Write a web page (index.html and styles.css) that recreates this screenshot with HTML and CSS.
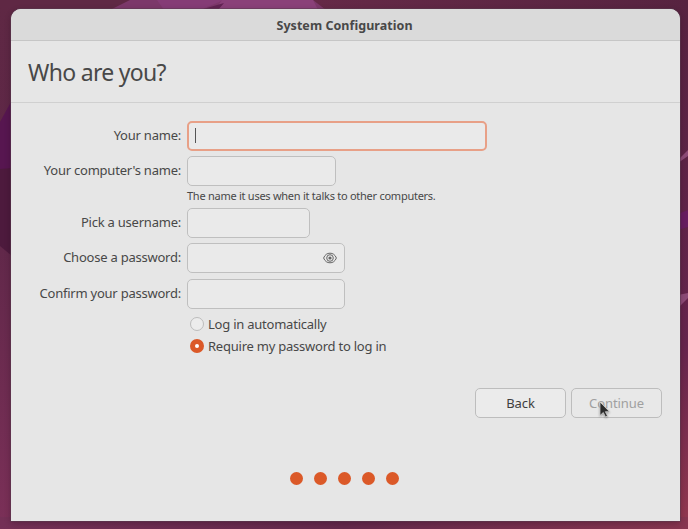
FILE: index.html
```html
<!DOCTYPE html>
<html lang="en">
<head>
<meta charset="utf-8">
<title>System Configuration</title>
<link rel="stylesheet" href="styles.css">
</head>
<body>
<svg class="wallpaper" viewBox="0 0 688 529" preserveAspectRatio="none" aria-hidden="true">
  <defs>
    <linearGradient id="left" x1="0" y1="0" x2="0" y2="1"><stop offset="0" stop-color="#5f2844"/><stop offset=".4" stop-color="#5e2748"/><stop offset="1" stop-color="#7b3058"/></linearGradient>
    <linearGradient id="right" x1="0" y1="0" x2="0" y2="1"><stop offset="0" stop-color="#572340"/><stop offset=".65" stop-color="#66254d"/><stop offset="1" stop-color="#93384f"/></linearGradient>
    <linearGradient id="top" x1="0" y1="0" x2="1" y2="0"><stop offset="0" stop-color="#652947"/><stop offset="1" stop-color="#572340"/></linearGradient>
    <linearGradient id="base" x1="0" y1="0" x2="1" y2="0"><stop offset="0" stop-color="#743056"/><stop offset=".5" stop-color="#64294c"/><stop offset="1" stop-color="#873650"/></linearGradient>
  </defs>
  <rect width="344" height="529" fill="url(#left)"/>
  <rect x="344" width="344" height="529" fill="url(#right)"/>
  <rect x="313" width="375" height="10" fill="url(#top)"/>
  <rect y="517" width="688" height="12" fill="url(#base)"/>
  <path d="M110 10 130 0H313L326 10Z" fill="#7c386a"/>
  <path d="M157 0H224L200 10H164Z" fill="#853c76"/>
  <path d="M222 0H313L318 10H215Z" fill="#8a4079"/>
  <path d="M224 3 200 10H218Z" fill="#622353"/>
  <path d="M0 122 12 100V170H0Z" fill="#571650"/>
  <path d="M0 169 12 168V256L0 246Z" fill="#4d1a3d"/>
  <path d="M678 160 688 150V156L678 163Z" fill="#8d4b77"/>
  <path d="M678 214 688 210V227L678 230Z" fill="#681d60"/>
  <path d="M678 295 688 293V298L678 308Z" fill="#8d4b77"/>
</svg>

<main class="window">
  <header class="titlebar">System Configuration</header>
  <div class="heading"><h1>Who are you?</h1></div>

  <form class="form">
    <label for="name">Your name:</label>
    <div class="field field-name focused" id="name"><span class="caret"></span></div>
    <label for="host">Your computer's name:</label>
    <div class="field field-host" id="host"></div>
    <p class="hint">The name it uses when it talks to other computers.</p>
    <label for="user">Pick a username:</label>
    <div class="field field-user" id="user"></div>
    <label for="pass">Choose a password:</label>
    <div class="field field-pass" id="pass">
      <svg class="eye" viewBox="0 0 14 12" aria-hidden="true"><path d="M.6 6C2 2.500 4.300 1.200 7 1.200S12 2.500 13.400 6C12 9.500 9.700 10.800 7 10.800S2 9.500.6 6Z"/><circle cx="7" cy="6" r="3.300"/><circle class="pupil" cx="7" cy="6" r="1.600"/></svg>
    </div>
    <label for="confirm">Confirm your password:</label>
    <div class="field field-pass" id="confirm"></div>
    <div class="radios">
      <div class="option"><i class="radio"></i><span>Log in automatically</span></div>
      <div class="option"><i class="radio checked"></i><span>Require my password to log in</span></div>
    </div>
  </form>

  <div class="actions">
    <button type="button">Back</button>
    <button type="button" disabled>Continue</button>
  </div>

  <footer class="steps"><i></i><i></i><i></i><i></i><i></i></footer>
</main>

<svg class="cursor" viewBox="0 0 12 18" aria-hidden="true"><path d="M1 1V14.500L4.300 11.500 6.500 16 8.500 15 6.400 10.700H10.500Z"/></svg>
</body>
</html>
```

FILE: styles.css
```css
* { box-sizing: border-box; }
body {
  margin: 0;
  width: 688px;
  height: 529px;
  overflow: hidden;
  padding: 9px 8px 8px 11px;
  background: #64294c;
  color: #484848;
  font: 13px/18px "Noto Sans", sans-serif;
  letter-spacing: -.23px;
}
.wallpaper { position: absolute; inset: 0; width: 688px; height: 529px; z-index: -1; }
.window {
  width: 669px;
  height: 512px;
  background: #e6e6e6;
  border-radius: 10px 10px 0 0;
  box-shadow: 0 0 0 1px rgba(90, 60, 80, .5), 0 2px 6px rgba(25, 5, 20, .3);
  overflow: hidden;
}
.titlebar {
  height: 32px;
  padding-right: 2px;
  border-bottom: 1px solid #c6c6c6;
  background: #dadada;
  line-height: 33px;
  text-align: center;
  font-size: 12.5px;
  font-weight: 700;
  letter-spacing: .05px;
}
.heading { height: 62px; padding: 14px 17px; border-bottom: 1px solid #d0d0d0; }
h1 { margin: 0; font-size: 23px; line-height: 34px; font-weight: 400; letter-spacing: -.7px; }
.form {
  display: grid;
  grid-template-columns: 170px 1fr;
  grid-template-rows: 35px 31px 21px 35px 36px 34px 44px;
  column-gap: 6px;
  padding-top: 18px;
  height: 286px;
}
.form label { text-align: right; line-height: 29px; white-space: nowrap; }
.field {
  height: 30px;
  border: 1px solid #bfbfbf;
  border-radius: 5px;
  background: #eaeaea;
}
.field-name { width: 300px; }
.field-host { width: 149px; }
.field-user { width: 123px; }
.field-pass { width: 158px; display: flex; align-items: center; justify-content: flex-end; padding-right: 7px; }
.focused { border: 2px solid #e8a087; padding: 5px 6px; }
.caret { display: block; width: 1px; height: 15px; background: #555; }
.eye { width: 14px; height: 12px; fill: none; stroke: #666; stroke-width: 1; }
.eye .pupil { fill: #666; stroke: none; }
.hint { grid-column: 2; margin: 0; font-size: 11px; line-height: 18px; letter-spacing: -.26px; white-space: nowrap; }
.radios { grid-column: 2; padding-left: 3px; }
.option { display: flex; align-items: center; gap: 4px; height: 22px; white-space: nowrap; }
.radio { width: 14px; height: 14px; border: 1px solid #bcbcbc; border-radius: 50%; background: #ececec; }
.radio.checked { border: 5px solid #db5928; background: #fff; }
.actions { display: flex; justify-content: flex-end; gap: 5px; padding-right: 18px; margin-top: -1px; }
button {
  width: 91px;
  height: 30px;
  padding: 0;
  border: 1px solid #bdbdbd;
  border-radius: 5px;
  background: #ebebeb;
  color: #3f3f3f;
  font: inherit;
  letter-spacing: -.1px;
}
button:disabled { background: #e8e8e8; color: #a0a0a0; }
.steps { display: flex; justify-content: center; gap: 11px; padding: 54px 2px 0 0; }
.steps i { width: 13px; height: 13px; border-radius: 50%; background: #db5928; }
.cursor {
  position: absolute;
  left: 599px;
  top: 401px;
  width: 12px;
  height: 18px;
  fill: #2c2c2c;
  stroke: #ddd;
  stroke-width: .7;
  filter: drop-shadow(0 1px 1px rgba(0, 0, 0, .35));
}
```
